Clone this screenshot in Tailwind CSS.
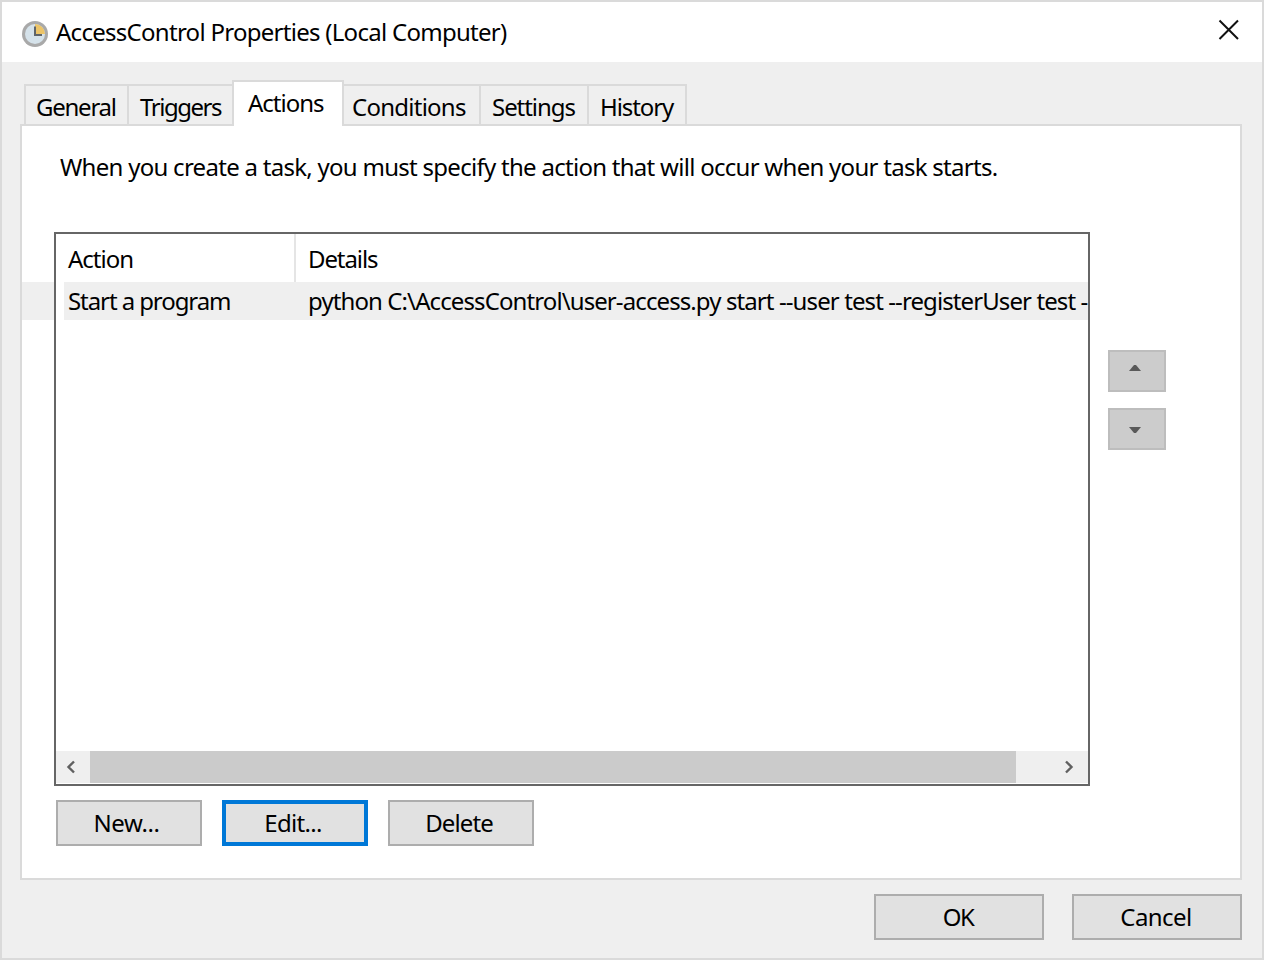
<!DOCTYPE html>
<html>
<head>
<meta charset="utf-8">
<script src="https://cdn.jsdelivr.net/npm/@tailwindcss/browser@4"></script>
</head>
<body class="bg-white">
<div class="w-[1264px] h-[960px] border-2 border-[#dadada] bg-[#efefef] flex flex-col text-[24px] leading-[32px] text-black font-['Noto_Sans',sans-serif] overflow-hidden">
  <div class="h-[60px] shrink-0 bg-white flex items-center pl-[19px] relative">
    <svg class="w-[28px] h-[28px] shrink-0 mt-[3px]" viewBox="0 0 28 28">
      <circle cx="14" cy="14" r="13" fill="#a9a9a9"/>
      <circle cx="14" cy="14" r="10" fill="#d5e2ea"/>
      <path d="M14 4a10 10 0 0 1 10 10H14z" fill="#ecc468"/>
      <path d="M14 6.5V15H21" fill="none" stroke="#5f6468" stroke-width="2"/>
    </svg>
    <span class="ml-[7px] tracking-[-0.72px]">AccessControl Properties (Local Computer)</span>
    <svg class="absolute left-[1216px] top-[17px] w-[22px] h-[22px]" viewBox="0 0 22 22"><path d="M1.5 1.5L20 20M20 1.5L1.5 20" stroke="#111" stroke-width="2" fill="none"/></svg>
  </div>
  <div class="h-[64px] shrink-0 pl-[22px] flex items-end -mb-[2px]">
    <div class="h-[42px] w-[105px] border-2 border-b-0 border-[#dadada] bg-[#efefef] pt-[5px] pl-[10px] tracking-[-1.25px]">General</div>
    <div class="h-[42px] w-[107px] -ml-[2px] border-2 border-b-0 border-[#dadada] bg-[#efefef] pt-[5px] pl-[11px] tracking-[-1.45px]">Triggers</div>
    <div class="h-[46px] w-[112px] -ml-[2px] border-2 border-b-0 border-[#dadada] bg-white pt-[5px] pl-[14px] tracking-[-1px] relative z-10">Actions</div>
    <div class="h-[42px] w-[137px] border-2 border-b-0 border-l-0 border-[#dadada] bg-[#efefef] pt-[5px] pl-[8px] tracking-[-0.75px]">Conditions</div>
    <div class="h-[42px] w-[110px] -ml-[2px] border-2 border-b-0 border-[#dadada] bg-[#efefef] pt-[5px] pl-[11px] tracking-[-1.05px]">Settings</div>
    <div class="h-[42px] w-[100px] -ml-[2px] border-2 border-b-0 border-[#dadada] bg-[#efefef] pt-[5px] pl-[11px] tracking-[-1.1px]">History</div>
  </div>
  <div class="ml-[18px] mr-[20px] h-[756px] shrink-0 border-2 border-[#dadada] bg-white relative flex flex-col">
    <p class="h-[106px] pl-[38px] pt-[25px] tracking-[-0.72px]">When you create a task, you must specify the action that will occur when your task starts.</p>
    <div class="flex">
      <div class="ml-[32px] w-[1036px] h-[554px] border-2 border-[#666666] flex flex-col relative">
        <div class="h-[48px] flex">
          <div class="w-[240px] border-r-2 border-[#e5e5e5] pl-[12px] pt-[9px] tracking-[-1px]">Action</div>
          <div class="pl-[12px] pt-[9px] tracking-[-1.1px]">Details</div>
        </div>
        <div class="h-[38px] ml-[8px] bg-[#efefef] flex overflow-hidden whitespace-nowrap">
          <div class="w-[232px] shrink-0 pl-[4px] pt-[3px] tracking-[-1.08px]">Start a program</div>
          <div class="pl-[12px] pt-[3px] tracking-[-0.9px]">python C:\AccessControl\user-access.py start --user test --registerUser test -</div>
        </div>
        <div class="flex-1"></div>
        <div class="h-[32px] flex items-stretch mb-[1px]">
          <div class="w-[34px] bg-[#efefef] flex items-center justify-start pl-[10px]"><svg class="w-[10px] h-[14px]" viewBox="0 0 10 14"><path d="M8 1.5L2.5 7L8 12.5" fill="none" stroke="#606060" stroke-width="2.4"/></svg></div>
          <div class="w-[926px] bg-[#cbcbcb]"></div>
          <div class="flex-1 bg-[#efefef] flex items-center justify-center pl-[34px]"><svg class="w-[10px] h-[14px]" viewBox="0 0 10 14"><path d="M2 1.5L7.5 7L2 12.5" fill="none" stroke="#606060" stroke-width="2.4"/></svg></div>
        </div>
      </div>
      <div class="ml-[18px] flex flex-col pt-[118px] gap-[16px]">
        <div class="w-[58px] h-[42px] border-2 border-[#bdbdbd] bg-[#cccccc] flex justify-center pt-[12px]"><svg class="w-[14px] h-[8px] -ml-[4px]" viewBox="0 0 14 8"><path d="M1 7H13L8 1H6z" fill="#595959"/></svg></div>
        <div class="w-[58px] h-[42px] border-2 border-[#bdbdbd] bg-[#cccccc] flex justify-center pt-[17px]"><svg class="w-[14px] h-[8px] -ml-[4px]" viewBox="0 0 14 8"><path d="M1 0H13L8 6H6z" fill="#595959"/></svg></div>
      </div>
    </div>
    <div class="ml-[34px] mt-[14px] flex gap-[20px]">
      <div class="w-[146px] h-[46px] border-2 border-[#adadad] bg-[#e1e1e1] flex items-center justify-center tracking-[-0.4px] pr-[5px]">New...</div>
      <div class="w-[146px] h-[46px] border-4 border-[#0078d7] bg-[#e1e1e1] flex items-center justify-center tracking-[-0.7px] pr-[4px]">Edit...</div>
      <div class="w-[146px] h-[46px] border-2 border-[#adadad] bg-[#e1e1e1] flex items-center justify-center tracking-[-0.9px] pr-[4px]">Delete</div>
    </div>
  </div>
  <div class="mr-[20px] mt-[14px] flex justify-end gap-[28px]">
    <div class="w-[170px] h-[46px] border-2 border-[#adadad] bg-[#e1e1e1] flex items-center justify-center tracking-[-1.5px] pr-[2px]">OK</div>
    <div class="w-[170px] h-[46px] border-2 border-[#adadad] bg-[#e1e1e1] flex items-center justify-center tracking-[-0.55px] pr-[2px]">Cancel</div>
  </div>
  <div class="absolute left-[22px] top-[282px] w-[32px] h-[38px] bg-[#efefef]"></div>
</div>
</body>
</html>
